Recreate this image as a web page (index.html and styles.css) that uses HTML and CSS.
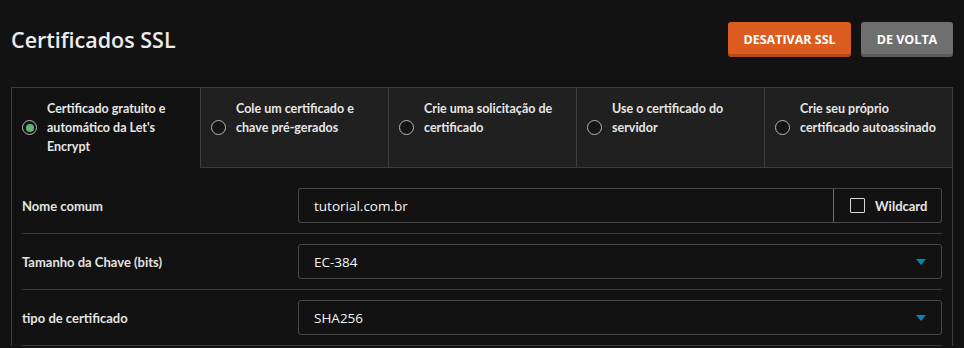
FILE: index.html
```html
<!DOCTYPE html>
<html lang="pt-BR">
<head>
<meta charset="utf-8">
<title>Certificados SSL</title>
<link rel="stylesheet" href="styles.css">
</head>
<body>
<div class="page">
  <header class="header">
    <h1 class="title">Certificados SSL</h1>
    <div class="actions">
      <button class="btn btn-orange">DESATIVAR SSL</button>
      <button class="btn btn-grey">DE VOLTA</button>
    </div>
  </header>
  <section class="panel">
    <div class="tabs">
      <div class="tab active">
        <span class="radio checked"></span>
        <span class="tab-text">Certificado gratuito e automático da Let's Encrypt</span>
      </div>
      <div class="tab">
        <span class="radio"></span>
        <span class="tab-text">Cole um certificado e chave pré-gerados</span>
      </div>
      <div class="tab">
        <span class="radio"></span>
        <span class="tab-text">Crie uma solicitação de certificado</span>
      </div>
      <div class="tab">
        <span class="radio"></span>
        <span class="tab-text">Use o certificado do servidor</span>
      </div>
      <div class="tab">
        <span class="radio"></span>
        <span class="tab-text">Crie seu próprio certificado autoassinado</span>
      </div>
    </div>
    <div class="content">
      <div class="row">
        <div class="label">Nome comum</div>
        <div class="group">
          <div class="field input">tutorial.com.br</div>
          <div class="addon"><span class="checkbox"></span><span>Wildcard</span></div>
        </div>
      </div>
      <div class="row">
        <div class="label">Tamanho da Chave (bits)</div>
        <div class="field select"><span>EC-384</span><span class="caret"></span></div>
      </div>
      <div class="row">
        <div class="label">tipo de certificado</div>
        <div class="field select"><span>SHA256</span><span class="caret"></span></div>
      </div>
    </div>
  </section>
</div>
</body>
</html>
```

FILE: styles.css
```css
* { box-sizing: border-box; }
html, body { margin: 0; padding: 0; background: #121212; }
body {
  font-family: "Open Sans", "Noto Sans", sans-serif;
  color: #e8e8e8;
  width: 964px;
  height: 348px;
  overflow: hidden;
}
.page { padding: 22px 11px 0 11px; }
.header {
  display: flex;
  justify-content: space-between;
  align-items: center;
  height: 35px;
  margin-bottom: 30px;
}
.title {
  margin: 0;
  font-size: 21.5px;
  font-weight: 600;
  color: #ececec;
}
.actions { display: flex; gap: 10px; }
.btn {
  font-family: "Open Sans", sans-serif;
  font-weight: 700;
  font-size: 12.5px;
  color: #fff;
  border: none;
  border-radius: 3px;
  height: 35px;
  padding: 0 10px;
  box-shadow: inset 0 -3px 0 rgba(0,0,0,0.18);
  cursor: pointer;
}
.btn-orange { background: #dc5b1f; width: 123px; }
.btn-grey { background: #6e706f; width: 92px; }

.panel {
  border: 1px solid #3e3e3e;
  border-bottom: none;
}
.tabs {
  display: grid;
  grid-template-columns: repeat(5, 1fr);
}
.tab {
  display: flex;
  align-items: flex-start;
  gap: 10px;
  padding: 11px 10px 11px 10px;
  background: #202020;
  border-left: 1px solid #3e3e3e;
  border-bottom: 1px solid #3e3e3e;
}
.tab.active {
  background: #121212;
  border-left: none;
  border-bottom-color: transparent;
}
.radio {
  flex: none;
  align-self: center;
  width: 15px;
  height: 15px;
  border: 1.5px solid #b5b5b5;
  border-radius: 50%;
  background: #151515;
  display: flex;
  align-items: center;
  justify-content: center;
}
.radio.checked::after {
  content: "";
  width: 8px;
  height: 8px;
  border-radius: 50%;
  background: #5cb66f;
}
.tab-text {
  font-family: "Lato", "Open Sans", sans-serif;
  font-size: 12.5px;
  font-weight: 700;
  line-height: 19px;
  color: #e6e6e6;
}

.content { padding: 10px 10px 0 10px; }
.row {
  display: grid;
  grid-template-columns: 30% 1fr;
  align-items: center;
  padding: 10px 0;
  border-bottom: 1px solid #393939;
}
.label {
  font-family: "Lato", "Open Sans", sans-serif;
  font-size: 13px;
  font-weight: 700;
  color: #e3e3e3;
}
.field {
  height: 35px;
  border: 1px solid #474747;
  border-radius: 3px;
  background: #121212;
  font-size: 13.5px;
  color: #f4f4f4;
  padding: 0 15px;
  display: flex;
  align-items: center;
}
.group { display: flex; }
.group .input {
  flex: 1;
  border-radius: 3px 0 0 3px;
  border-right: 1px solid #6a6a6a;
}
.addon {
  width: 108px;
  height: 35px;
  border: 1px solid #474747;
  border-left: none;
  border-radius: 0 3px 3px 0;
  display: flex;
  align-items: center;
  gap: 10px;
  padding-left: 16px;
  font-family: "Lato", "Open Sans", sans-serif;
  font-size: 13px;
  font-weight: 700;
  color: #e3e3e3;
}
.checkbox {
  width: 15px;
  height: 15px;
  border: 1.5px solid #d8d8d8;
  border-radius: 1px;
}
.select { justify-content: space-between; }
.caret {
  width: 0;
  height: 0;
  border-left: 5px solid transparent;
  border-right: 5px solid transparent;
  border-top: 6px solid #0a86b5;
}
```
